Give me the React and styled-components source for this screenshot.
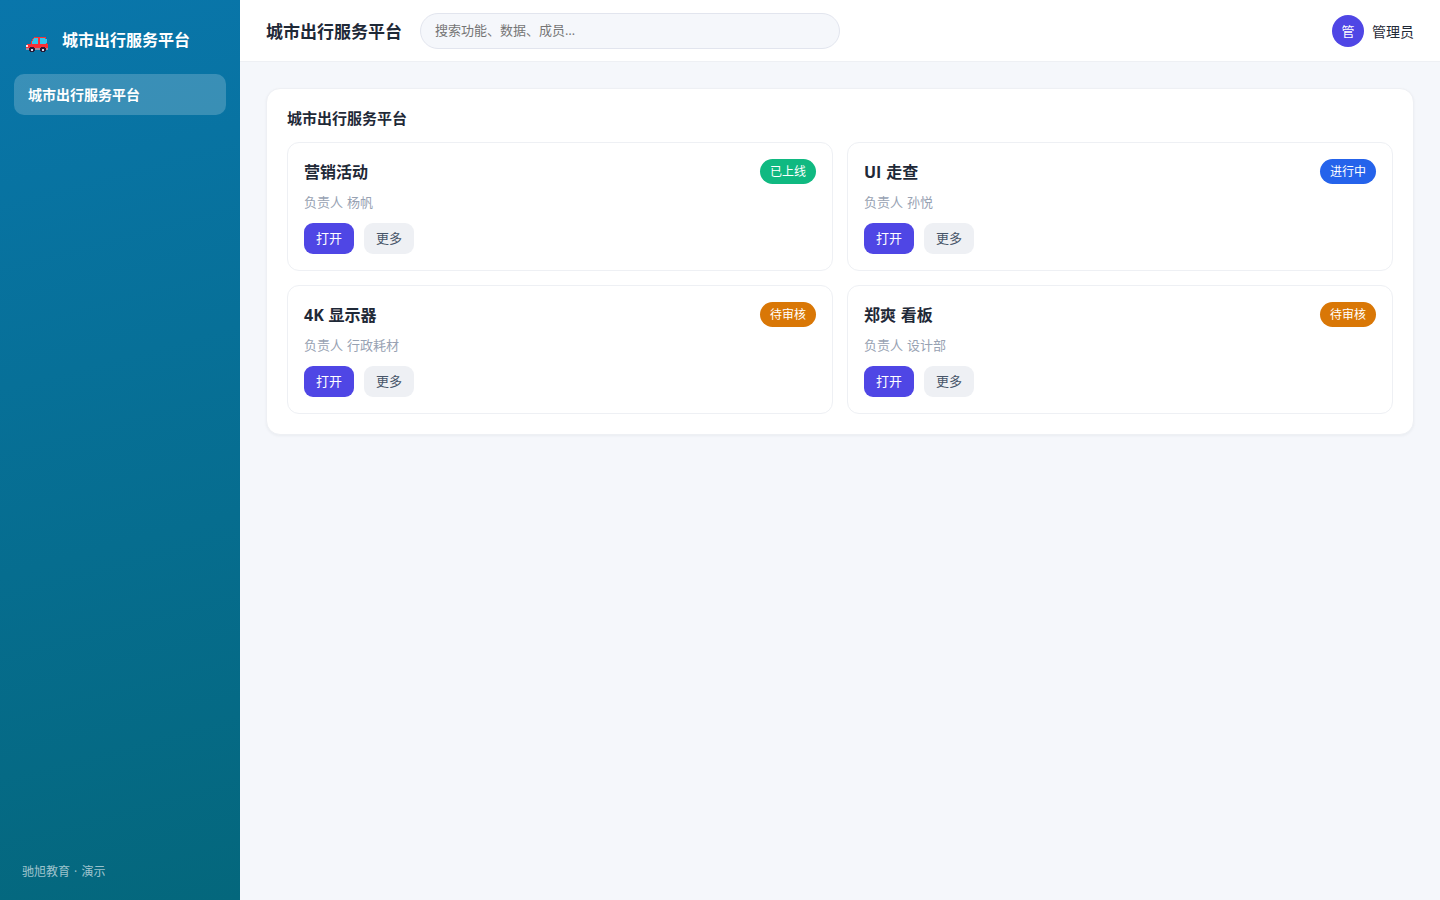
import React from 'react';
import styled, { createGlobalStyle } from 'styled-components';

const Global = createGlobalStyle`
  * { box-sizing: border-box; }
  body { margin: 0; background: #f5f7fb; color: #1f2937; font-size: 14px;
    font-family: "Open Sans", "Noto Sans CJK SC", sans-serif; word-spacing: .6px; }
  button, input { font-family: inherit; }
`;
const Layout = styled.div`display: flex; min-height: 100vh;`;
const Sidebar = styled.aside`
  width: 240px; flex: none; display: flex; flex-direction: column; padding: 22px 14px 19px; color: #fff;
  background: linear-gradient(165deg, #0976ab, #04677c);
`;
const Brand = styled.div`
  display: flex; align-items: center; gap: 10px; height: 52px; padding: 4px 8px 20px; font-size: 16px; font-weight: 700; line-height: 24px;
`;
const Logo = styled.span`width: 30px; padding: 9px 0 0 4px; line-height: 0;`;
const NavItem = styled.div`
  height: 41px; display: flex; align-items: center; padding: 0 14px 2px; border-radius: 10px;
  background: rgba(255,255,255,.2); font-weight: 700;
`;
const Foot = styled.div`
  margin-top: auto; padding: 0 8px; font-size: 12px; line-height: 18px; word-spacing: 1px; color: rgba(255,255,255,.62);
`;
const Main = styled.div`flex: 1; min-width: 0;`;
const Topbar = styled.header`
  height: 62px; display: flex; align-items: center; gap: 18px; padding: 0 26px;
  background: #fff; border-bottom: 1px solid #eef0f4;
`;
const Title = styled.h1`margin: 0; font-size: 17px; font-weight: 700;`;
const Search = styled.input`
  width: 420px; height: 36px; padding: 0 14px 2px; border: 1px solid #e2e5ee; border-radius: 18px;
  background: #f5f7fb; font-size: 13px;
`;
const User = styled.div`margin-left: auto; display: flex; align-items: center; gap: 8px;`;
const Avatar = styled.span`
  width: 32px; height: 32px; border-radius: 50%; display: grid; place-items: center; background: #4f46e5; color: #fff;
  font-size: 13px;
`;
const Content = styled.main`padding: 26px;`;
const Panel = styled.section`
  padding: 20px; border: 1px solid #eef0f4; border-radius: 14px; background: #fff; box-shadow: 0 1px 3px rgba(20,30,60,.05);
`;
const PanelTitle = styled.h2`margin: 0 0 14px; font-size: 15px; line-height: 19px; font-weight: 700;`;
const Grid = styled.div`display: grid; grid-template-columns: 1fr 1fr; gap: 14px;`;
const Card = styled.article`height: 129px; padding: 16px; border: 1px solid #eef0f4; border-radius: 12px;`;
const CardHead = styled.div`display: flex; justify-content: space-between; align-items: center; height: 25px;`;
const CardTitle = styled.h3`margin: 0; padding-top: 2px; font-size: 16px; line-height: 25px; font-weight: 700;`;
const Badge = styled.span`
  height: 25px; display: flex; align-items: center; padding: 0 10px 1px; border-radius: 13px; color: #fff; font-size: 12px;
  background: ${p => p.$color};
`;
const Owner = styled.div`margin: 8px 0 11px; line-height: 20px; font-size: 13px; color: #98a2b3;`;
const Actions = styled.div`display: flex; gap: 10px;`;
const Button = styled.button`
  width: 50px; height: 31px; padding: 0 0 2px; border: 0; border-radius: 9px; font-size: 13px;
  background: ${p => p.$primary ? '#4f46e5' : '#eef0f4'}; color: ${p => p.$primary ? '#fff' : '#475569'};
`;
const items = [
  ['营销活动', '杨帆', '已上线', '#10b981'],
  ['UI 走查', '孙悦', '进行中', '#2563eb'],
  ['4K 显示器', '行政耗材', '待审核', '#d97706'],
  ['郑爽 看板', '设计部', '待审核', '#d97706'],
];

function Car() {
  return (
    <svg width="22" height="15" viewBox="0 0 22 15" shapeRendering="crispEdges">
      <path fill="#f92f35" d="M8 0H20V2H21V7H22V12H0V8H1V7H5V4H6V2H7V1H8Z" />
      <path fill="#30c5ed" d="M8 1H12V7H6V4H7V2H8ZM14 1H19V2H20V7H14Z" />
      <path fill="#30c5ed" d="M20 2H21V6H20Z" />
      <path fill="#ffe5e8" d="M0 8H2V10H0Z" />
      <path fill="#998ea0" d="M0 11H22V13H0Z" />
      <path fill="#281b35" d="M4 10H8V11H9V14H8V15H4V14H3V11H4ZM15 10H19V11H20V14H19V15H15V14H14V11H15Z" />
      <path fill="#d8d8ed" d="M5 12H7V14H5ZM16 12H18V14H16Z" />
    </svg>
  );
}

export default function App() {
  return (
    <Layout>
      <Global />
      <Sidebar>
        <Brand><Logo><Car /></Logo><span>城市出行服务平台</span></Brand>
        <NavItem>城市出行服务平台</NavItem>
        <Foot>驰旭教育 · 演示</Foot>
      </Sidebar>
      <Main>
        <Topbar>
          <Title>城市出行服务平台</Title>
          <Search placeholder="搜索功能、数据、成员…" />
          <User><Avatar>管</Avatar>管理员</User>
        </Topbar>
        <Content>
          <Panel>
            <PanelTitle>城市出行服务平台</PanelTitle>
            <Grid>
              {items.map(([name, owner, status, color]) => (
                <Card key={name}>
                  <CardHead><CardTitle>{name}</CardTitle><Badge $color={color}>{status}</Badge></CardHead>
                  <Owner>负责人 {owner}</Owner>
                  <Actions><Button $primary>打开</Button><Button>更多</Button></Actions>
                </Card>
              ))}
            </Grid>
          </Panel>
        </Content>
      </Main>
    </Layout>
  );
}
